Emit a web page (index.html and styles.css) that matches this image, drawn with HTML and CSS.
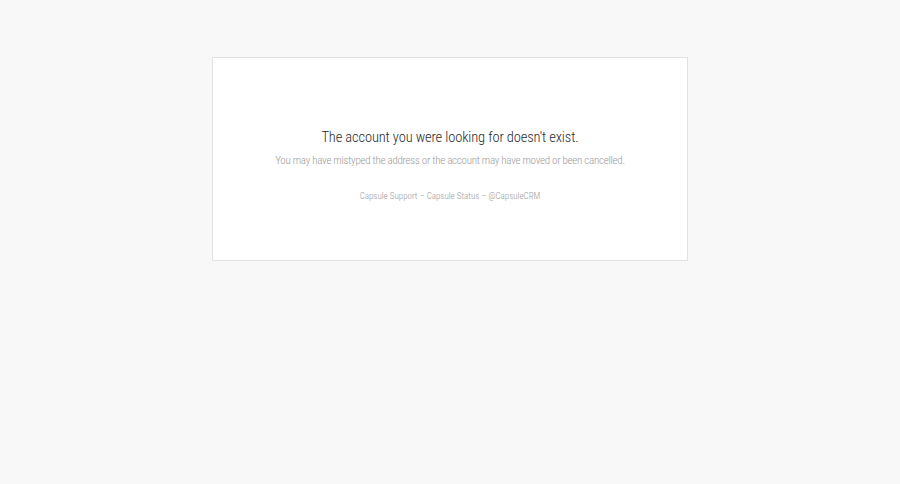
FILE: index.html
```html
<!DOCTYPE html>
<html lang="en">
<head>
<meta charset="utf-8">
<title>Account not found</title>
<link rel="stylesheet" href="styles.css">
</head>
<body>
<main class="card">
  <h1 class="title">The account you were looking for doesn't exist.</h1>
  <p class="subtitle">You may have mistyped the address or the account may have moved or been cancelled.</p>
  <p class="links"><a href="#">Capsule Support</a> – <a href="#">Capsule Status</a> – <a href="#">@CapsuleCRM</a></p>
</main>
</body>
</html>
```

FILE: styles.css
```css
html, body {
  margin: 0;
  padding: 0;
  background: #f8f8f8;
}
body {
  font-family: "Roboto Condensed", "Roboto", "Liberation Sans", sans-serif;
  font-weight: 300;
  padding-top: 57px;
}
.card {
  box-sizing: border-box;
  width: 476px;
  height: 204px;
  margin: 0 auto;
  background: #fff;
  border: 1px solid #e2e2e2;
  display: flex;
  flex-direction: column;
  align-items: center;
  padding-top: 70px;
}
.title {
  margin: 0;
  font-size: 14.5px;
  letter-spacing: -0.13px;
  font-weight: 300;
  color: #2a2a2a;
  line-height: 20px;
}
.subtitle {
  margin: 5px 0 0;
  font-size: 11px;
  letter-spacing: -0.27px;
  color: #9a9a9a;
  line-height: 16px;
}
.links {
  margin: 20px 0 0;
  font-size: 9px;
  color: #999;
  line-height: 14px;
}
.links a {
  color: #999;
  text-decoration: none;
}
```
